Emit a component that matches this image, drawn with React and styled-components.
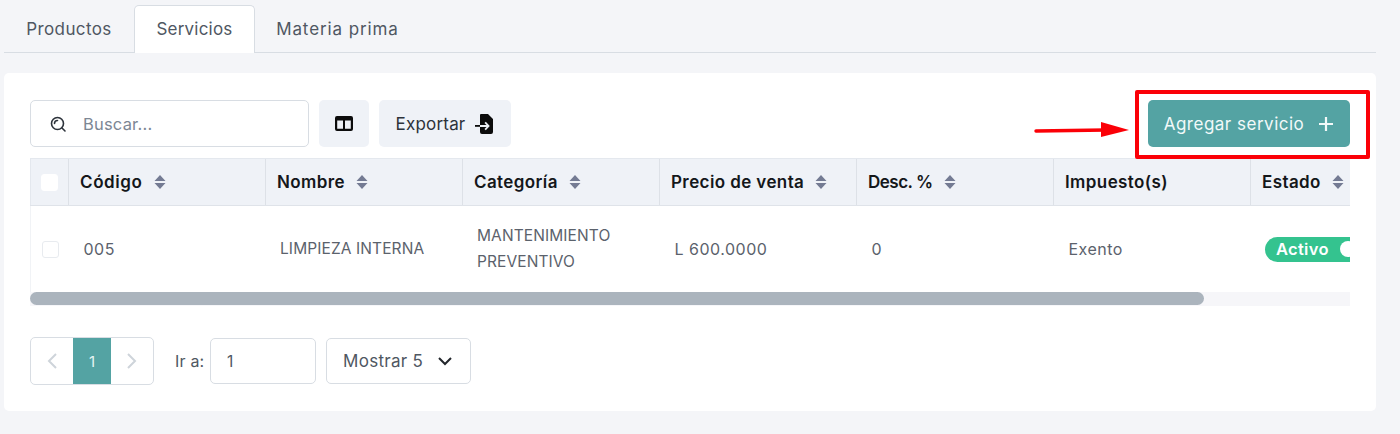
import React from 'react'
import styled, { createGlobalStyle } from 'styled-components'

const GlobalStyle = createGlobalStyle`
  html, body {
    margin: 0;
    background: #f4f5f8;
    font-family: "Inter", "Open Sans", sans-serif;
  }
  * { box-sizing: border-box; }
`

const Page = styled.div`
  width: 1400px;
  height: 434px;
  padding: 5px 24px 0 4px;
  overflow: hidden;
`

const Tabs = styled.div`
  display: flex;
  height: 48px;
  border-bottom: 1px solid #d8dde3;
`

const Tab = styled.div`
  width: ${props => props.$width}px;
  height: 48px;
  display: flex;
  align-items: center;
  justify-content: center;
  padding-bottom: 2px;
  font-size: 17px;
  letter-spacing: ${props => props.$spacing}px;
  color: #4f5762;
  background: ${props => props.$active ? '#fff' : 'transparent'};
  border: 1px solid ${props => props.$active ? '#d8dde3' : 'transparent'};
  border-bottom: none;
  border-radius: 5px 5px 0 0;
  position: relative;
  z-index: 1;
`

const Card = styled.div`
  position: relative;
  margin-top: 20px;
  height: 338px;
  padding: 27px 26px 0;
  background: #fff;
  border-radius: 5px;
`

const Toolbar = styled.div`
  display: flex;
  gap: 10px;
  height: 47px;
`

const SearchBox = styled.div`
  width: 279px;
  display: flex;
  align-items: center;
  gap: 16px;
  padding-left: 18px;
  border: 1px solid #d8dde3;
  border-radius: 5px;
  font-size: 16.5px;
  letter-spacing: .2px;
  color: #7d8794;
`

const GreyButton = styled.div`
  display: flex;
  align-items: center;
  justify-content: center;
  gap: 10px;
  width: ${props => props.$width}px;
  background: #eff2f7;
  border-radius: 5px;
  font-size: 17px;
  letter-spacing: .2px;
  color: #2d333b;
`

const AddButton = styled.div`
  margin-left: auto;
  width: 202px;
  display: flex;
  align-items: center;
  justify-content: center;
  gap: 14px;
  background: #54a3a3;
  border-radius: 5px;
  color: #f2f9f9;
  font-size: 17px;
  letter-spacing: .5px;
`

const Highlight = styled.div`
  position: absolute;
  left: 1131px;
  top: 17px;
  width: 235px;
  height: 69px;
  border: 4px solid #fb0007;
  border-radius: 2px;
`

const Arrow = styled.svg`
  position: absolute;
  left: 1030px;
  top: 47px;
`

const TableWrap = styled.div`
  margin-top: 11px;
  width: 1320px;
  overflow: hidden;
`

const Row = styled.div`
  display: grid;
  grid-template-columns: 38px repeat(6, 197px) 197px;
  width: 1420px;
`

const HeadRow = styled(Row)`
  height: 48px;
  background: #eff2f7;
  border-top: 1px solid #e4e8ee;
  border-bottom: 1px solid #dfe3e9;
`

const BodyRow = styled(Row)`
  height: 86px;
`

const HeadCell = styled.div`
  display: flex;
  align-items: center;
  gap: 11px;
  padding-left: 11px;
  padding-bottom: 1px;
  font-size: 17px;
  letter-spacing: ${props => props.$spacing ?? .4}px;
  font-weight: 600;
  color: #14171a;
  border-left: 1px solid #dde1e7;
`

const CheckHead = styled.div`
  display: flex;
  align-items: center;
  justify-content: center;
  border-left: 1px solid #e4e8ee;
`

const BodyCell = styled.div`
  display: flex;
  align-items: center;
  padding-left: ${props => props.$wide ? 15.5 : 15}px;
  font-size: ${props => props.$wide ? 16 : 15.5}px;
  letter-spacing: ${props => props.$wide ? .5 : .1}px;
  line-height: 26px;
  color: #5b626c;
`

const CheckCell = styled(BodyCell)`
  padding-left: 11px;
  border-left: 1px solid #f1f3f6;
`

const Check = styled.div`
  width: 17px;
  height: 17px;
  background: #fff;
  border-radius: 3px;
  border: 1px solid ${props => props.$head ? '#fff' : '#e8ebef'};
`

const StatusPill = styled.div`
  display: flex;
  align-items: center;
  gap: 11px;
  height: 25px;
  width: 100px;
  padding-left: 11px;
  border-radius: 13px;
  background: #34c38f;
  color: #fff;
  font-size: 16.5px;
  letter-spacing: .3px;
  font-weight: 600;
`

const Knob = styled.span`
  width: 16px;
  height: 16px;
  border-radius: 50%;
  background: #fff;
  flex-shrink: 0;
`

const ScrollTrack = styled.div`
  height: 14px;
  background: #f6f6f9;
`

const ScrollThumb = styled.div`
  width: 1174px;
  height: 13px;
  background: #abb4bd;
  border-radius: 7px;
`

const Footer = styled.div`
  display: flex;
  align-items: center;
  margin-top: 31px;
  height: 48px;
`

const Pager = styled.div`
  display: flex;
  width: 124px;
  height: 48px;
  border: 1px solid #d8dde3;
  border-radius: 5px;
  overflow: hidden;
`

const PagerArrow = styled.div`
  display: flex;
  align-items: center;
  justify-content: center;
  width: ${props => props.$width}px;
`

const PageNumber = styled.div`
  width: 38px;
  display: flex;
  align-items: center;
  justify-content: center;
  background: #54a3a3;
  color: #e6f3f3;
  font-size: 15px;
`

const GotoLabel = styled.div`
  width: 35px;
  margin-left: 21px;
  font-size: 16px;
  letter-spacing: .2px;
  color: #4f5762;
`

const GotoInput = styled.div`
  width: 106px;
  height: 46px;
  display: flex;
  align-items: center;
  padding-left: 16px;
  border: 1px solid #d8dde3;
  border-radius: 5px;
  font-size: 15.5px;
  color: #4f5762;
`

const ShowSelect = styled.div`
  width: 145px;
  height: 46px;
  margin-left: 10px;
  display: flex;
  align-items: center;
  gap: 14px;
  padding-left: 16px;
  border: 1px solid #d8dde3;
  border-radius: 5px;
  font-size: 17px;
  letter-spacing: .3px;
  color: #4f5762;
`

const SortIcon = () => (
  <svg width="12" height="16" viewBox="0 0 12 16">
    <path d="M6 1 L11.5 7 H0.5 Z M0.5 9 H11.5 L6 15 Z" fill="#747b93" />
  </svg>
)

const columns = [
  { label: 'Código', sort: true, spacing: .6 },
  { label: 'Nombre', sort: true },
  { label: 'Categoría', sort: true },
  { label: 'Precio de venta', sort: true },
  { label: 'Desc. %', sort: true, spacing: -.5 },
  { label: 'Impuesto(s)' },
  { label: 'Estado', sort: true },
]

export default function App() {
  return (
    <Page>
      <GlobalStyle />
      <Tabs>
        <Tab $width={130} $spacing={.4}>Productos</Tab>
        <Tab $width={121} $spacing={.2} $active>Servicios</Tab>
        <Tab $width={165} $spacing={.9}>Materia prima</Tab>
      </Tabs>
      <Card>
        <Toolbar>
          <SearchBox>
            <svg width="18" height="18" viewBox="0 0 18 18" fill="none" stroke="#2d333b" strokeWidth="1.6">
              <circle cx="8.5" cy="8.5" r="6" />
              <path d="M5.5 8.5a3 3 0 0 1 3-3M13 13l3 3" strokeLinecap="round" />
            </svg>
            Buscar...
          </SearchBox>
          <GreyButton $width={50}>
            <svg width="18" height="15" viewBox="0 0 18 15">
              <path fillRule="evenodd" d="M2 0h14a2 2 0 0 1 2 2v11a2 2 0 0 1-2 2H2a2 2 0 0 1-2-2V2a2 2 0 0 1 2-2zM2.2 4.5v8.3h5.8V4.5zm7.8 0v8.3h5.8V4.5z" fill="#0c0c0c" />
            </svg>
          </GreyButton>
          <GreyButton $width={132}>
            Exportar
            <svg width="19" height="20" viewBox="0 0 19 20">
              <path d="M6 0h7l5 5v13a2 2 0 0 1-2 2H7a2 2 0 0 1-2-2v-5h6.5l-2 2 1.3 1.2 4-4.2-4-4.2L9.5 9l2 2H5V1a1 1 0 0 1 1-1z" fill="#0c0c0c" />
              <path d="M0 11h5v1.8H0z" fill="#0c0c0c" />
            </svg>
          </GreyButton>
          <AddButton>
            Agregar servicio
            <svg width="16" height="16" viewBox="0 0 16 16" stroke="#f2f9f9" strokeWidth="2.2">
              <path d="M8 1v14M1 8h14" />
            </svg>
          </AddButton>
        </Toolbar>
        <Highlight />
        <Arrow width="96" height="20" viewBox="0 0 96 20">
          <path d="M2 11 L72 10" stroke="#fb0007" strokeWidth="3.4" strokeLinecap="round" />
          <path d="M67 2 L95 10 L67 17 Z" fill="#fb0007" />
        </Arrow>
        <TableWrap>
          <HeadRow>
            <CheckHead><Check $head /></CheckHead>
            {columns.map(col => (
              <HeadCell key={col.label} $spacing={col.spacing}>
                {col.label}
                {col.sort && <SortIcon />}
              </HeadCell>
            ))}
          </HeadRow>
          <BodyRow>
            <CheckCell><Check /></CheckCell>
            <BodyCell $wide>005</BodyCell>
            <BodyCell>LIMPIEZA INTERNA</BodyCell>
            <BodyCell>MANTENIMIENTO<br />PREVENTIVO</BodyCell>
            <BodyCell $wide>L 600.0000</BodyCell>
            <BodyCell $wide>0</BodyCell>
            <BodyCell $wide>Exento</BodyCell>
            <BodyCell>
              <StatusPill>Activo<Knob /></StatusPill>
            </BodyCell>
          </BodyRow>
          <ScrollTrack><ScrollThumb /></ScrollTrack>
        </TableWrap>
        <Footer>
          <Pager>
            <PagerArrow $width={42}>
              <svg width="12" height="18" viewBox="0 0 12 18" fill="none" stroke="#ced4da" strokeWidth="2">
                <path d="M10 2 L3 9 L10 16" />
              </svg>
            </PagerArrow>
            <PageNumber>1</PageNumber>
            <PagerArrow $width={42}>
              <svg width="12" height="18" viewBox="0 0 12 18" fill="none" stroke="#ced4da" strokeWidth="2">
                <path d="M2 2 L9 9 L2 16" />
              </svg>
            </PagerArrow>
          </Pager>
          <GotoLabel>Ir a:</GotoLabel>
          <GotoInput>1</GotoInput>
          <ShowSelect>
            Mostrar 5
            <svg width="16" height="10" viewBox="0 0 16 10" fill="none" stroke="#22262b" strokeWidth="2">
              <path d="M2 2 L8 8 L14 2" />
            </svg>
          </ShowSelect>
        </Footer>
      </Card>
    </Page>
  )
}
